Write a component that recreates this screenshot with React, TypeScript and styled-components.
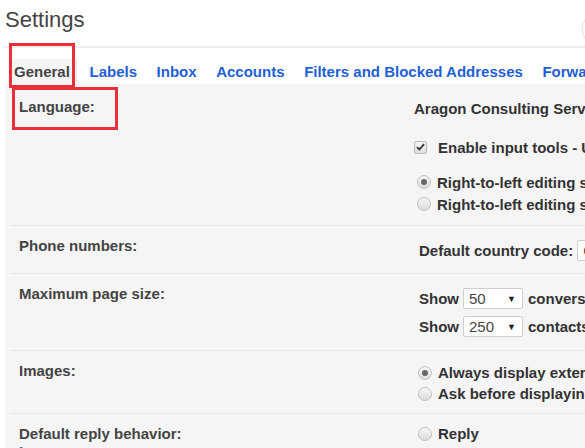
import styled, { createGlobalStyle } from 'styled-components'

const GlobalStyle = createGlobalStyle`
  html, body {
    margin: 0;
    padding: 0;
    background: #fff;
    overflow: hidden;
  }
  body {
    font-family: "Liberation Sans", Arial, sans-serif;
  }
`

const Page = styled.div`
  position: relative;
  width: 1000px;
  height: 448px;
  overflow: hidden;
`

const Header = styled.div`
  display: flex;
  align-items: flex-start;
  width: 620px;
  height: 46px;
  box-sizing: border-box;
  padding: 7px 0 0 5px;
`

const Title = styled.h1`
  margin: 0;
  font-size: 22px;
  line-height: 26px;
  font-weight: normal;
  color: #444;
`

const AccountButton = styled.div`
  margin-left: auto;
  margin-top: 3px;
  width: 38px;
  height: 38px;
  border-radius: 50%;
  border: 1px solid #e2e2e2;
  box-sizing: border-box;
  background: #fff;
`

const TabBar = styled.div`
  display: flex;
  gap: 6.6px;
  margin-left: 3px;
  padding: 11px 0 0 5px;
  border-top: 2px solid #eeeeee;
  white-space: nowrap;
`

const Tab = styled.div<{ $active?: boolean }>`
  height: 25px;
  line-height: 25px;
  padding: 0 6px;
  font-size: 15px;
  font-weight: bold;
  color: ${(p) => (p.$active ? '#444' : '#1f60d4')};
  background: ${(p) => (p.$active ? '#f5f5f5' : 'transparent')};
  border-right: 1px solid ${(p) => (p.$active ? '#e6e6e6' : 'transparent')};
`

const Panel = styled.div`
  margin-left: 5px;
  padding-top: 3px;
  background: #f5f5f5;
  min-height: 400px;
`

const Row = styled.div<{ $pb?: number }>`
  display: grid;
  grid-template-columns: 404px 1fr;
  margin-left: 5px;
  padding: 11px 0 ${(p) => p.$pb ?? 12}px;
  border-bottom: 1px solid #e6e6e6;
  white-space: nowrap;
`

const Label = styled.div`
  padding-left: 9px;
  font-size: 15px;
  line-height: 18px;
  font-weight: bold;
  color: #444;
`

const HelpLink = styled.div`
  font-size: 15px;
  line-height: 18px;
  color: #1f60d4;
`

const Value = styled.div`
  display: flex;
  flex-direction: column;
  font-size: 15px;
  font-weight: bold;
  color: #333;
`

const Line = styled.div<{ $h?: number; $mt?: number; $indent?: number }>`
  display: flex;
  align-items: center;
  height: ${(p) => p.$h ?? 20}px;
  margin-top: ${(p) => p.$mt ?? 0}px;
  padding-left: ${(p) => p.$indent ?? 0}px;
`

const Box = styled.span`
  display: inline-flex;
  align-items: center;
  justify-content: center;
  width: 13px;
  height: 13px;
  margin-right: 11px;
  box-sizing: border-box;
  border: 1px solid #b9b9b9;
  border-radius: 2px;
  background: linear-gradient(#f4f4f4, #dedede);
`

const Radio = styled.span<{ $on?: boolean }>`
  position: relative;
  display: inline-block;
  width: 14px;
  height: 14px;
  margin-right: 6px;
  box-sizing: border-box;
  border: 1px solid #c2c2c2;
  border-radius: 50%;
  background: linear-gradient(#f6f6f6, #dcdcdc);

  &::after {
    content: '';
    display: ${(p) => (p.$on ? 'block' : 'none')};
    position: absolute;
    left: 3px;
    top: 3px;
    width: 6px;
    height: 6px;
    border-radius: 50%;
    background: #666;
  }
`

const Select = styled.span<{ $w?: number }>`
  display: inline-flex;
  align-items: center;
  justify-content: space-between;
  width: ${(p) => p.$w ?? 60}px;
  height: 21px;
  margin: 0 5px 0 4px;
  padding: 0 6px 0 5px;
  box-sizing: border-box;
  border: 1px solid #cfcfcf;
  border-radius: 2px;
  background: #fff;
  font-weight: normal;
  color: #444;
`

const Arrow = styled.span`
  font-size: 9px;
  color: #222;
`

const Note = styled.div<{ $x: number; $y: number; $w: number; $h: number }>`
  position: absolute;
  left: ${(p) => p.$x}px;
  top: ${(p) => p.$y}px;
  width: ${(p) => p.$w}px;
  height: ${(p) => p.$h}px;
  box-sizing: border-box;
  border: 3px solid #ea2f3a;
  pointer-events: none;
`

const Check = () => (
  <Box>
    <svg width="9" height="8" viewBox="0 0 9 8">
      <path d="M1 4.2 L3.4 6.5 L8 1.2" fill="none" stroke="#333" strokeWidth="1.8" />
    </svg>
  </Box>
)

const tabs = ['General', 'Labels', 'Inbox', 'Accounts', 'Filters and Blocked Addresses', 'Forwarding and POP/IMAP', 'Add-ons']

export default function App() {
  return (
    <Page>
      <GlobalStyle />
      <Header>
        <Title>Settings</Title>
        <AccountButton />
      </Header>
      <TabBar>
        {tabs.map((t, i) => (
          <Tab key={t} $active={i === 0}>
            {t}
          </Tab>
        ))}
      </TabBar>
      <Panel>
        <Row $pb={10}>
          <Label>Language:</Label>
          <Value>
            <Line>Aragon Consulting Services</Line>
            <Line $mt={19}>
              <Check />
              Enable input tools - Use various text input tools to type in the language of your choice
            </Line>
            <Line $mt={14} $h={22} $indent={3}>
              <Radio $on />
              Right-to-left editing support off
            </Line>
            <Line $h={22} $indent={3}>
              <Radio />
              Right-to-left editing support on
            </Line>
          </Value>
        </Row>
        <Row>
          <Label>Phone numbers:</Label>
          <Value>
            <Line $h={22} $mt={2} $indent={5}>
              Default country code:
              <Select $w={120}>
                China
                <Arrow>▼</Arrow>
              </Select>
            </Line>
          </Value>
        </Row>
        <Row $pb={13}>
          <Label>Maximum page size:</Label>
          <Value>
            <Line $h={21} $mt={3} $indent={5}>
              Show
              <Select>
                50
                <Arrow>▼</Arrow>
              </Select>
              conversations per page
            </Line>
            <Line $h={21} $mt={7} $indent={5}>
              Show
              <Select>
                250
                <Arrow>▼</Arrow>
              </Select>
              contacts per page
            </Line>
          </Value>
        </Row>
        <Row $pb={9}>
          <Label>Images:</Label>
          <Value>
            <Line $h={21} $indent={4}>
              <Radio $on />
              Always display external images
            </Line>
            <Line $h={21} $indent={4}>
              <Radio />
              Ask before displaying external images
            </Line>
          </Value>
        </Row>
        <Row>
          <Label>
            Default reply behavior:
            <HelpLink>Learn more</HelpLink>
          </Label>
          <Value>
            <Line $h={21} $mt={-2} $indent={4}>
              <Radio />
              Reply
            </Line>
            <Line $h={21} $indent={4}>
              <Radio $on />
              Reply all
            </Line>
          </Value>
        </Row>
      </Panel>
      <Note $x={9} $y={43} $w={66} $h={45} />
      <Note $x={12} $y={87} $w={106} $h={43} />
    </Page>
  )
}
